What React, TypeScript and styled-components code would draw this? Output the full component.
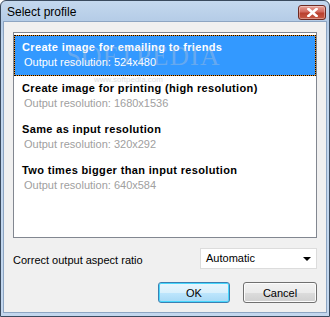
import styled, { createGlobalStyle } from 'styled-components';

const Global = createGlobalStyle`
  html, body {
    margin: 0;
    padding: 0;
    background: #ffffff;
  }
`;

const Window = styled.div`
  width: 330px;
  height: 317px;
  box-sizing: border-box;
  border: 1px solid #3a4a5e;
  border-radius: 6px 6px 0 0;
  background: linear-gradient(#c4d8ee, #b3cbe6 22px, #bfd4ec 40px, #c3d7ee);
  display: flex;
  flex-direction: column;
  font-family: 'Liberation Sans', Arial, sans-serif;
  position: relative;
  overflow: hidden;
`;

const TitleBar = styled.div`
  height: 20px;
  display: flex;
  align-items: flex-start;
  justify-content: space-between;
  padding: 0 3px 0 6px;
`;

const TitleText = styled.span`
  font-size: 12px;
  color: #000;
  margin-top: 4px;
`;

const CloseButton = styled.div`
  width: 26px;
  height: 13px;
  margin-top: 4px;
  border: 1px solid #6e2a22;
  border-radius: 3px;
  background: linear-gradient(#e8a49a, #d2695c 45%, #b9402f 55%, #c75a44);
  display: flex;
  align-items: center;
  justify-content: center;
  box-shadow: inset 0 0 0 1px rgba(255, 255, 255, 0.35);
`;

const Client = styled.div`
  flex: 1;
  margin: 0 2px 3px 2px;
  border: 1px solid #8da5c2;
  background: #f0f0f0;
  padding: 10px 9px 9px 9px;
  display: flex;
  flex-direction: column;
`;

const ListBox = styled.div`
  height: 202px;
  border: 1px solid #828790;
  background: #ffffff;
  padding-top: 2px;
  display: flex;
  flex-direction: column;
  position: relative;
`;

const Item = styled.div<{ $selected?: boolean }>`
  height: 39px;
  padding: 0 0 0 7px;
  border: 1px ${(p) => (p.$selected ? 'dotted #000' : 'solid transparent')};
  background: ${(p) =>
    p.$selected
      ? 'linear-gradient(#3399ff, #3399ff) padding-box, #e8902a border-box'
      : 'transparent'};
  display: flex;
  flex-direction: column;
  justify-content: center;
  gap: 3px;
`;

const ItemTitle = styled.div<{ $selected?: boolean }>`
  font-weight: bold;
  font-size: 11px;
  letter-spacing: 0.35px;
  margin-top: -2px;
  color: ${(p) => (p.$selected ? '#ffffff' : '#000000')};
`;

const ItemSub = styled.div<{ $selected?: boolean }>`
  font-size: 11px;
  padding-left: 2px;
  color: ${(p) => (p.$selected ? '#ffffff' : '#a0a0a0')};
`;

const Watermark = styled.div`
  position: absolute;
  left: 52px;
  top: 8px;
  font-family: 'Liberation Serif', serif;
  font-size: 27px;
  letter-spacing: 1px;
  color: rgba(200, 200, 210, 0.35);
  pointer-events: none;
`;

const WatermarkUrl = styled.div`
  position: absolute;
  left: 80px;
  top: 42px;
  font-size: 8px;
  color: rgba(190, 190, 190, 0.5);
  pointer-events: none;
`;

const OptionRow = styled.div`
  margin-top: 10px;
  display: flex;
  align-items: center;
  justify-content: space-between;
`;

const Label = styled.span`
  font-size: 11px;
  color: #000;
  margin-top: 3px;
`;

const Combo = styled.div`
  width: 117px;
  height: 21px;
  box-sizing: border-box;
  border: 1px solid #dcdcdc;
  background: #fff;
  display: flex;
  align-items: center;
  justify-content: space-between;
  padding: 0 5px 2px 5px;
  font-size: 11px;
  color: #000;
`;

const Arrow = styled.div`
  width: 0;
  height: 0;
  border-left: 4px solid transparent;
  border-right: 4px solid transparent;
  border-top: 4px solid #000;
  margin-top: 3px;
`;

const ButtonRow = styled.div`
  margin-top: auto;
  display: flex;
  justify-content: flex-end;
  gap: 13px;
`;

const Button = styled.div<{ $default?: boolean }>`
  width: ${(p) => (p.$default ? '72px' : '74px')};
  height: 21px;
  box-sizing: border-box;
  border: 1px solid ${(p) => (p.$default ? '#3c7fb1' : '#707070')};
  border-radius: 3px;
  background: ${(p) =>
    p.$default
      ? 'linear-gradient(#eaf6fd, #d9f0fc 50%, #bee6fd 50%, #a7d9f5)'
      : 'linear-gradient(#f2f2f2, #ebebeb 50%, #dddddd 50%, #cfcfcf)'};
  box-shadow: inset 0 0 0 1px ${(p) => (p.$default ? '#48d7fd' : '#fcfcfc')};
  display: flex;
  align-items: center;
  justify-content: center;
  font-size: 11px;
  color: #000;
`;

const profiles = [
  { title: 'Create image for emailing to friends', res: '524x480' },
  { title: 'Create image for printing (high resolution)', res: '1680x1536' },
  { title: 'Same as input resolution', res: '320x292' },
  { title: 'Two times bigger than input resolution', res: '640x584' },
];

export default function App() {
  return (
    <>
      <Global />
      <Window>
        <TitleBar>
          <TitleText>Select profile</TitleText>
          <CloseButton>
            <svg width="11" height="9" viewBox="0 0 11 9">
              <path
                d="M1.5 1 L9.5 8 M9.5 1 L1.5 8"
                stroke="#ffffff"
                strokeWidth="2.6"
                strokeLinecap="square"
              />
            </svg>
          </CloseButton>
        </TitleBar>
        <Client>
          <ListBox>
            {profiles.map((p, i) => (
              <Item key={p.title} $selected={i === 0}>
                <ItemTitle $selected={i === 0}>{p.title}</ItemTitle>
                <ItemSub $selected={i === 0}>Output resolution: {p.res}</ItemSub>
              </Item>
            ))}
            <Watermark>SOFTPEDIA</Watermark>
            <WatermarkUrl>www.softpedia.com</WatermarkUrl>
          </ListBox>
          <OptionRow>
            <Label>Correct output aspect ratio</Label>
            <Combo>
              <span>Automatic</span>
              <Arrow />
            </Combo>
          </OptionRow>
          <ButtonRow>
            <Button $default>OK</Button>
            <Button>Cancel</Button>
          </ButtonRow>
        </Client>
      </Window>
    </>
  );
}
